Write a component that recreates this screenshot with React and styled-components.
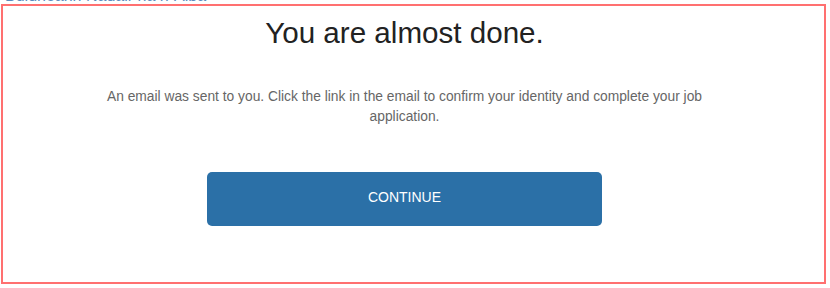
import React from 'react';
import styled, { createGlobalStyle } from 'styled-components';

const GlobalStyle = createGlobalStyle`
  body {
    margin: 0;
    background: #fff;
    font-family: "Liberation Sans", Arial, sans-serif;
  }
`;

const TopBar = styled.div`
  height: 4px;
  overflow: hidden;
  display: flex;
  align-items: flex-end;
  padding-left: 5px;
`;

const OrgLink = styled.a`
  color: #5a8bbd;
  font-size: 16px;
  line-height: 16px;
  text-decoration: none;
  white-space: nowrap;
`;

const Panel = styled.div`
  margin-left: 1px;
  width: 825px;
  height: 280px;
  box-sizing: border-box;
  border: 2px solid #ff7070;
  padding: 10px 18px 0 0;
  display: flex;
  flex-direction: column;
  align-items: center;
`;

const Title = styled.h1`
  margin: 0;
  font-size: 29.6px;
  line-height: 33px;
  font-weight: normal;
  color: #222;
`;

const Message = styled.p`
  margin: 38px 0 0;
  max-width: 640px;
  font-size: 13.8px;
  line-height: 20px;
  color: #666;
  text-align: center;
`;

const ContinueButton = styled.button`
  margin-top: 45px;
  width: 395px;
  height: 54px;
  padding: 0 0 4px;
  border: none;
  border-radius: 5px;
  background: #2b70a7;
  color: #fff;
  font-family: inherit;
  font-size: 14px;
  text-transform: uppercase;
  cursor: pointer;
`;

export default function App() {
  return (
    <>
      <GlobalStyle />
      <TopBar>
        <OrgLink href="#">Buidheann Nàdair na h-Alba</OrgLink>
      </TopBar>
      <Panel>
        <Title>You are almost done.</Title>
        <Message>
          An email was sent to you. Click the link in the email to confirm your identity and
          complete your job application.
        </Message>
        <ContinueButton type="button">Continue</ContinueButton>
      </Panel>
    </>
  );
}
